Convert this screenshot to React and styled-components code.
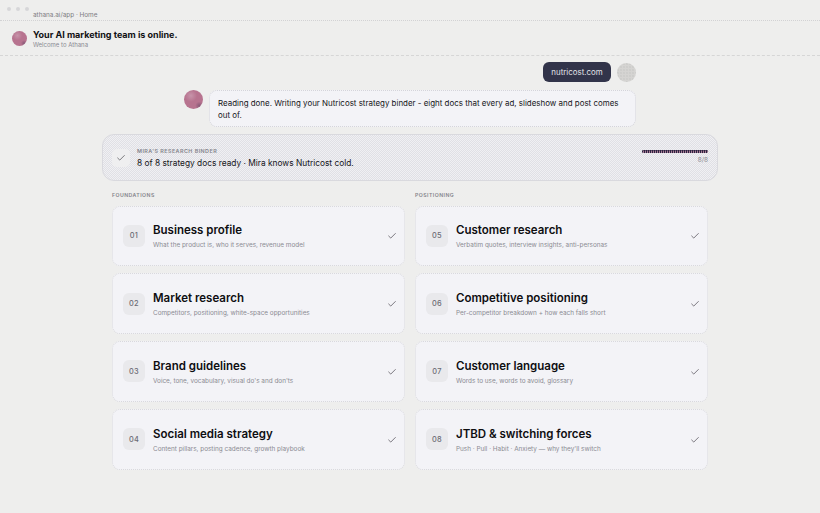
import React from "react";
import styled, { createGlobalStyle } from "styled-components";
import { Check } from "lucide-react";

const GlobalStyle = createGlobalStyle`
  html, body {
    margin: 0;
    height: 100%;
    background: #eeeeed;
  }
  body {
    font-family: Inter, "Liberation Sans", sans-serif;
    color: #111114;
    overflow: hidden;
  }
  * {
    box-sizing: border-box;
  }
`;

const Page = styled.div`
  width: 820px;
  height: 513px;
  display: flex;
  flex-direction: column;
  align-items: center;
`;

const TopBar = styled.div`
  width: 100%;
  height: 21px;
  display: flex;
  align-items: center;
  padding: 0 0 0 7px;
  border-bottom: 1px dotted #d2d2d4;
`;

const Dots = styled.div`
  display: flex;
  gap: 5px;
  width: 26px;
  margin-top: -2px;
`;

const Dot = styled.span`
  width: 4px;
  height: 4px;
  border-radius: 50%;
  background: #d6d6d8;
`;

const Url = styled.span`
  font-size: 6.4px;
  color: #7d7d83;
  margin-top: 9px;
`;

const Header = styled.div`
  width: 100%;
  height: 35px;
  display: flex;
  align-items: center;
  gap: 6px;
  padding: 0 0 0 12px;
  border-bottom: 1px dashed #d6d6d6;
`;

const HeaderText = styled.div`
  display: flex;
  flex-direction: column;
`;

const Title = styled.div`
  font-size: 9px;
  font-weight: 700;
  line-height: 13px;
  color: #101013;
`;

const Subtitle = styled.div`
  font-size: 6px;
  line-height: 8px;
  color: #8a8a92;
`;

const Avatar = styled.div`
  flex: none;
  width: ${(p) => p.$size}px;
  height: ${(p) => p.$size}px;
  border-radius: 50%;
  background-color: ${(p) => (p.$user ? "#d5d4d2" : "#b7738f")};
  background-image: ${(p) =>
    p.$user
      ? "radial-gradient(circle at 1px 1px, #c6c5c3 0.6px, transparent 0.8px)"
      : "radial-gradient(circle at 36% 30%, #c794aa 0, transparent 34%), radial-gradient(circle at 80% 82%, #8a5a78 0, transparent 18%)"};
  background-size: ${(p) => (p.$user ? "3px 3px" : "100% 100%")};
`;

const Chat = styled.div`
  width: 452px;
  margin-top: 6px;
  display: flex;
  flex-direction: column;
  gap: 8px;
`;

const ChatRow = styled.div`
  display: flex;
  align-items: ${(p) => (p.$user ? "center" : "flex-start")};
  justify-content: ${(p) => (p.$user ? "flex-end" : "flex-start")};
  gap: 6px;
`;

const UserBubble = styled.div`
  width: 68px;
  height: 20px;
  border-radius: 6px;
  background: #32344a;
  color: #e3e3e8;
  font-size: 7.9px;
  display: flex;
  align-items: center;
  justify-content: center;
`;

const AgentBubble = styled.div`
  flex: 1;
  height: 37px;
  padding: 5.5px 8px;
  border-radius: 8px;
  background: #f3f3f7;
  border: 1px dotted #d4d4da;
  font-size: 7.95px;
  line-height: 12.2px;
  color: #15151a;
`;

const Binder = styled.div`
  width: 616px;
  height: 47px;
  margin-top: 7px;
  padding: 0 9px 0 9px;
  border-radius: 12px;
  border: 1px solid #d9d9de;
  background-color: #e9e9ed;
  background-image: repeating-conic-gradient(#e0e0e5 0 25%, #f0f0f3 0 50%);
  background-size: 2px 2px;
  display: flex;
  align-items: center;
  gap: 7px;
`;

const CheckTile = styled.div`
  width: 18px;
  height: 18px;
  border-radius: 5px;
  background: #efeff0;
  color: #4a4a50;
  display: flex;
  align-items: center;
  justify-content: center;
`;

const BinderText = styled.div`
  flex: 1;
  display: flex;
  flex-direction: column;
  gap: 2px;
  padding-top: 2px;
`;

const Eyebrow = styled.div`
  font-size: 5.4px;
  line-height: 7px;
  font-weight: 600;
  letter-spacing: 0.45px;
  color: #85858d;
  text-transform: uppercase;
`;

const BinderLine = styled.div`
  font-size: 8.35px;
  line-height: 12px;
  color: #15151a;
`;

const Progress = styled.div`
  width: 66px;
  display: flex;
  flex-direction: column;
  align-items: flex-end;
  gap: 3px;
  margin-top: -1px;
`;

const Track = styled.div`
  width: 100%;
  height: 3px;
  border-radius: 2px;
  background: repeating-linear-gradient(90deg, #2b2440 0 1px, #a97c96 1px 2px);
  box-shadow: inset 0 0.5px 0 #2b2440;
`;

const Count = styled.div`
  font-size: 6.4px;
  line-height: 8px;
  color: #8c8c93;
`;

const Columns = styled.div`
  width: 596px;
  margin-top: 11px;
  display: grid;
  grid-template-columns: 293px 293px;
  column-gap: 10px;
`;

const Column = styled.div`
  display: flex;
  flex-direction: column;
  gap: 7.3px;
`;

const SectionLabel = styled(Eyebrow)`
  height: 9px;
  margin-bottom: -2.7px;
  font-size: 5.2px;
  color: #84848b;
`;

const Card = styled.div`
  height: 60.5px;
  padding: 0 7px 0 10px;
  border-radius: 8px;
  border: 1px dotted #d9d9dd;
  background: #f3f3f7;
  display: flex;
  align-items: center;
  gap: 8px;
`;

const NumTile = styled.div`
  flex: none;
  width: 22px;
  height: 22px;
  border-radius: 6px;
  background-color: #e9e9ec;
  background-image: radial-gradient(circle at 1px 1px, #d8d8dc 0.5px, transparent 0.7px);
  background-size: 2px 2px;
  color: #6c6c74;
  font-size: 7.4px;
  font-weight: 500;
  letter-spacing: 0.3px;
  display: flex;
  align-items: center;
  justify-content: center;
`;

const CardText = styled.div`
  flex: 1;
  display: flex;
  flex-direction: column;
  gap: 3px;
  padding-top: 2px;
`;

const CardTitle = styled.div`
  font-size: 11.5px;
  line-height: 15px;
  font-weight: 600;
  color: #0e0e11;
`;

const CardDesc = styled.div`
  font-size: 6.4px;
  line-height: 9px;
  color: #8b8b93;
`;

const CardCheck = styled(Check)`
  flex: none;
  margin-top: 1px;
  color: #4a464e;
`;

const foundations = [
  ["01", "Business profile", "What the product is, who it serves, revenue model"],
  ["02", "Market research", "Competitors, positioning, white-space opportunities"],
  ["03", "Brand guidelines", "Voice, tone, vocabulary, visual do's and don'ts"],
  ["04", "Social media strategy", "Content pillars, posting cadence, growth playbook"],
];

const positioning = [
  ["05", "Customer research", "Verbatim quotes, interview insights, anti-personas"],
  ["06", "Competitive positioning", "Per-competitor breakdown + how each falls short"],
  ["07", "Customer language", "Words to use, words to avoid, glossary"],
  ["08", "JTBD & switching forces", "Push · Pull · Habit · Anxiety — why they'll switch"],
];

const DocColumn = ({ label, docs }) => (
  <Column>
    <SectionLabel>{label}</SectionLabel>
    {docs.map(([num, title, desc]) => (
      <Card key={num}>
        <NumTile>{num}</NumTile>
        <CardText>
          <CardTitle>{title}</CardTitle>
          <CardDesc>{desc}</CardDesc>
        </CardText>
        <CardCheck size={10} strokeWidth={1.7} />
      </Card>
    ))}
  </Column>
);

const App = () => {
  return (
    <Page>
      <GlobalStyle />
      <TopBar>
        <Dots>
          <Dot />
          <Dot />
          <Dot />
        </Dots>
        <Url>athana.ai/app · Home</Url>
      </TopBar>
      <Header>
        <Avatar $size={15} />
        <HeaderText>
          <Title>Your AI marketing team is online.</Title>
          <Subtitle>Welcome to Athana</Subtitle>
        </HeaderText>
      </Header>
      <Chat>
        <ChatRow $user>
          <UserBubble>nutricost.com</UserBubble>
          <Avatar $size={19} $user />
        </ChatRow>
        <ChatRow>
          <Avatar $size={19} />
          <AgentBubble>
            Reading done. Writing your Nutricost strategy binder - eight docs that every ad,
            slideshow and post comes out of.
          </AgentBubble>
        </ChatRow>
      </Chat>
      <Binder>
        <CheckTile>
          <Check size={10} strokeWidth={1.7} />
        </CheckTile>
        <BinderText>
          <Eyebrow>Mira's research binder</Eyebrow>
          <BinderLine>8 of 8 strategy docs ready · Mira knows Nutricost cold.</BinderLine>
        </BinderText>
        <Progress>
          <Track />
          <Count>8/8</Count>
        </Progress>
      </Binder>
      <Columns>
        <DocColumn label="Foundations" docs={foundations} />
        <DocColumn label="Positioning" docs={positioning} />
      </Columns>
    </Page>
  );
};

export default App;
